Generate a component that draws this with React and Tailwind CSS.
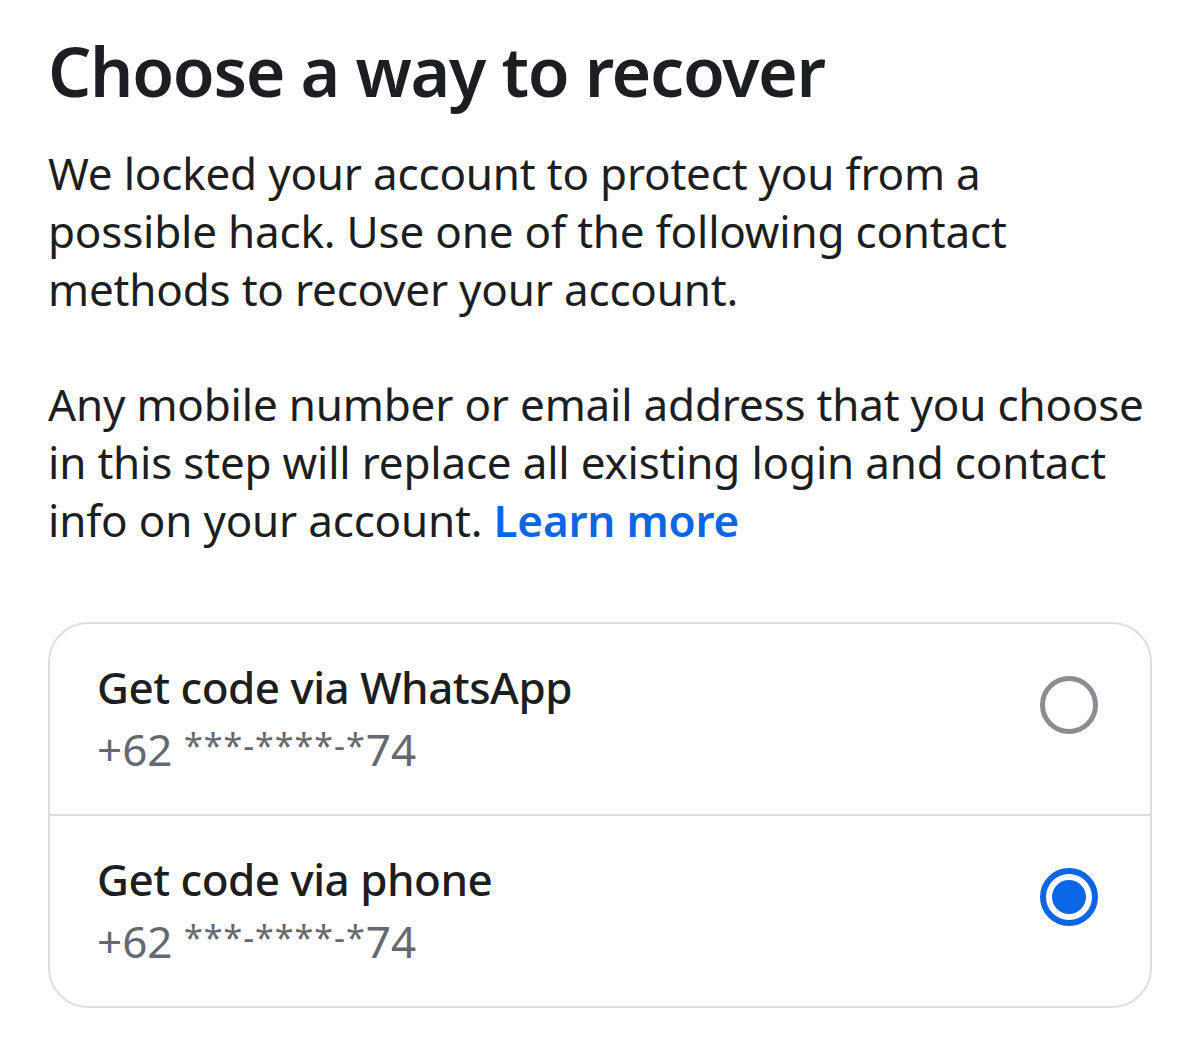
import { useState } from "react";

const options = [
  { id: "whatsapp", title: "Get code via WhatsApp" },
  { id: "phone", title: "Get code via phone" },
];

function Radio({ checked }) {
  if (checked) {
    return (
      <span className="mb-[28px] w-[58px] h-[58px] rounded-full border-[6px] border-[#0a66e4] flex items-center justify-center shrink-0">
        <span className="w-[34px] h-[34px] rounded-full bg-[#0a66e4]" />
      </span>
    );
  }
  return <span className="mb-[28px] w-[58px] h-[58px] rounded-full border-[5px] border-[#8a8d91] shrink-0" />;
}

export default function App() {
  const [selected, setSelected] = useState("phone");

  return (
    <div className="min-h-screen bg-white font-['Noto_Sans',sans-serif] text-[#1c1e21]">
      <main className="px-[48px] pt-[27px]">
        <h1 className="text-[68px] font-semibold leading-[88px] tracking-[-1.3px]">Choose a way to recover</h1>

        <div className="w-[1112px] tracking-[-0.2px]">
          <p className="mt-[29px] text-[44px] leading-[58px]">
            We locked your account to protect you from a possible hack. Use one of the following contact methods to recover your account.
          </p>
          <p className="mt-[57px] text-[44px] leading-[58px]">
            Any mobile number or email address that you choose in this step will replace all existing login and contact info on your account.{" "}
            <a href="#" className="text-[#0a66e4] font-semibold">Learn more</a>
          </p>
        </div>

        {/* Contact methods */}
        <div className="mt-[73px] border-2 border-[#dadde1] rounded-[40px] overflow-hidden">
          {options.map((opt, i) => (
            <button
              key={opt.id}
              onClick={() => setSelected(opt.id)}
              className={
                "w-full flex items-center justify-between pl-[47px] pr-[52px] text-left " +
                (i > 0 ? "h-[192px] border-t-2 border-[#dadde1]" : "h-[190px]")
              }
            >
              <div>
                <p className="text-[44px] leading-[56px] font-medium tracking-[-0.5px]">{opt.title}</p>
                <p className="text-[44px] leading-[60px] text-[#65686c]">
                  +62 <span className="text-[34px] tracking-[1px] align-[8px]">***-****-*</span>74
                </p>
              </div>
              <Radio checked={selected === opt.id} />
            </button>
          ))}
        </div>
      </main>
    </div>
  );
}
